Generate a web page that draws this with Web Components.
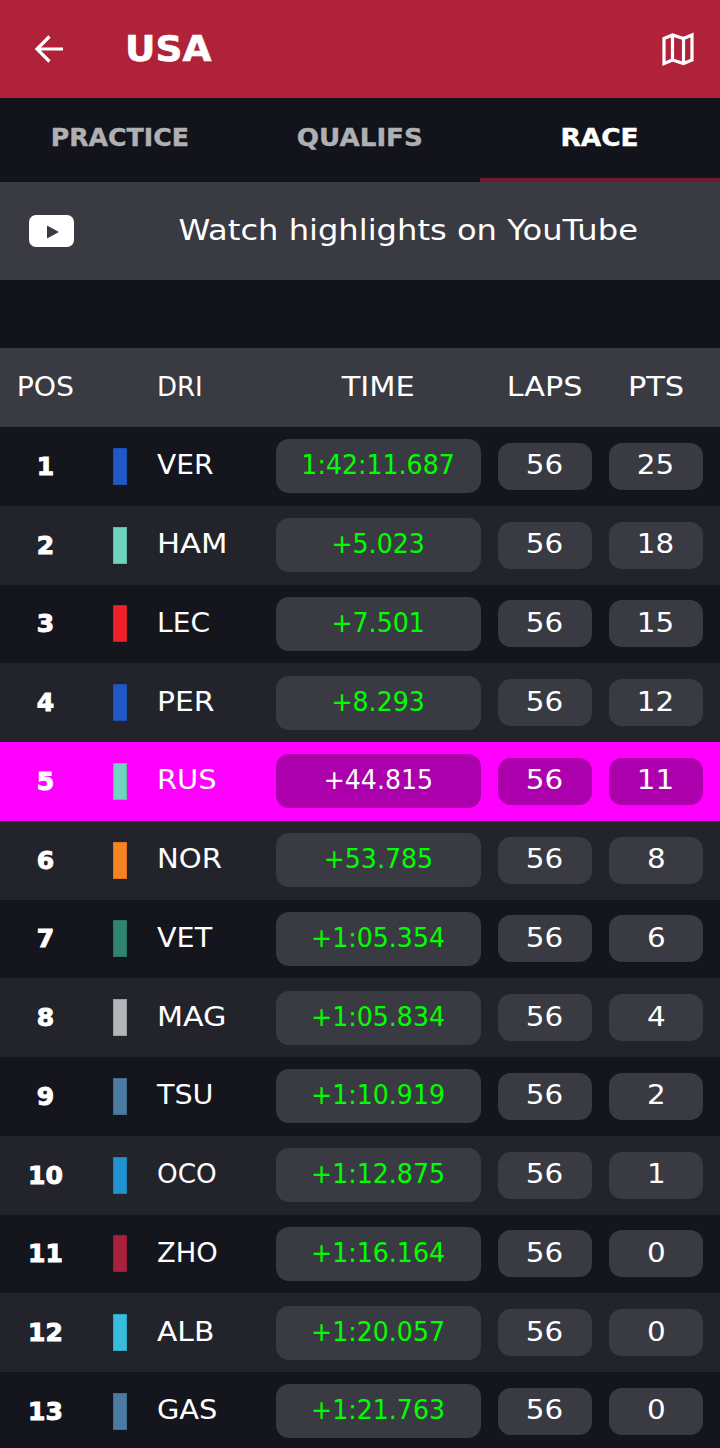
<!DOCTYPE html>
<html>
<head>
<meta charset="utf-8">
<title>USA</title>
<style>
  html, body { margin: 0; padding: 0; background: #12131b; overflow: hidden; }
  body { font-family: "DejaVu Sans", sans-serif; color: #fff; height: 1448px; }
</style>
</head>
<body>
<app-bar title="USA"></app-bar>
<tab-bar></tab-bar>
<video-banner>Watch highlights on YouTube</video-banner>
<results-table id="results"></results-table>

<script>
// the original face is much wider than anything installed, so text gets stretched
const wideText = `
  .w {
    display: inline-block;
    white-space: nowrap;
    transform: scaleX(var(--sx, 1));
  }
`;

class AppBar extends HTMLElement {
  constructor() {
    super();
    this.attachShadow({ mode: 'open' });
    this.shadowRoot.innerHTML = `
      <style>
        ${wideText}
        :host {
          display: flex;
          align-items: center;
          height: 98px;
          background-color: #b02239;
        }
        .back { margin-left: 28px; width: 42px; height: 42px; flex: none; }
        h1 {
          margin: 0 0 0 55px;
          flex: 1;
          font: 700 35px/1 "DejaVu Sans", sans-serif;
          -webkit-text-stroke: 0.6px #fff;
        }
        h1 .w { transform-origin: left center; }
        .map { margin-right: 24px; width: 36px; height: 36px; flex: none; }
      </style>
      <svg class="back" viewBox="0 0 42 42" fill="none" stroke="#fff" stroke-width="3.2">
        <path d="M35 21H9M21.500 8.500L9 21 21.500 33.500"/>
      </svg>
      <h1><span class="w" style="--sx:1.07">${this.getAttribute('title')}</span></h1>
      <svg class="map" viewBox="0 0 36 36" fill="none" stroke="#fff" stroke-width="3.2" stroke-linejoin="miter">
        <path d="M4 7.500L12.500 4 23.500 7.500 32 4V29L23.500 32.500 12.500 29 4 32.500ZM12.500 4V29M23.500 7.500V32.500"/>
      </svg>
    `;
  }
}
customElements.define('app-bar', AppBar);

class TabBar extends HTMLElement {
  constructor() {
    super();
    this.attachShadow({ mode: 'open' });
    this.shadowRoot.innerHTML = `
      <style>
        ${wideText}
        :host {
          display: grid;
          grid-template-columns: repeat(3, 1fr);
          height: 84px;
          background-color: #12131b;
        }
        div {
          display: flex;
          align-items: center;
          justify-content: center;
          font: 700 24px/1 "DejaVu Sans", sans-serif;
          -webkit-text-stroke: 0.4px currentColor;
          color: #b0b0b3;
          box-sizing: border-box;
          border-bottom: 4px solid transparent;
        }
        .active { color: #fff; border-bottom-color: #6f1a2d; }
      </style>
      <div><span class="w" style="--sx:1.05">PRACTICE</span></div>
      <div><span class="w" style="--sx:1.09">QUALIFS</span></div>
      <div class="active"><span class="w" style="--sx:1.1">RACE</span></div>
    `;
  }
}
customElements.define('tab-bar', TabBar);

class VideoBanner extends HTMLElement {
  constructor() {
    super();
    this.attachShadow({ mode: 'open' });
    this.shadowRoot.innerHTML = `
      <style>
        ${wideText}
        :host {
          display: flex;
          align-items: center;
          height: 98px;
          background-color: #393a42;
          margin-bottom: 68px;
          font: 400 28px/1 "DejaVu Sans", sans-serif;
        }
        svg { margin-left: 29px; width: 45px; height: 32px; flex: none; }
        span.label { flex: 1; text-align: center; padding-left: 23px; }
      </style>
      <svg viewBox="0 0 45 32">
        <rect width="45" height="32" rx="7" fill="#fff"/>
        <path d="M18 10.500L30 17 18 23.500Z" fill="#393a42"/>
      </svg>
      <span class="label"><span class="w" style="--sx:1.148"><slot></slot></span></span>
    `;
  }
}
customElements.define('video-banner', VideoBanner);

class ResultRow extends HTMLElement {
  constructor() {
    super();
    this.attachShadow({ mode: 'open' });
    this.shadowRoot.innerHTML = `
      <style>
        ${wideText}
        :host {
          display: grid;
          grid-template-columns: 91px 66px 119px 205px 111px 111px;
          align-items: center;
          height: 78.75px;
          background-color: #15151e;
          font: 400 26px/1 "DejaVu Sans", sans-serif;
        }
        :host([even]) { background-color: #22232b; }
        :host([me]) { background-color: #ff00ff; }
        .pos {
          text-align: center;
          font-weight: 700;
          font-size: 25px;
          -webkit-text-stroke: 1px #fff;
        }
        .bar {
          margin-left: 22px;
          width: 14px;
          height: 37px;
          box-sizing: border-box;
          border: 1px solid rgba(0, 0, 0, 0.12);
          background-color: var(--team);
        }
        .dri { padding-bottom: 2px; }
        .dri .w { transform-origin: left center; }
        .pill {
          display: flex;
          align-items: center;
          justify-content: center;
          height: 47px;
          width: 94px;
          justify-self: end;
          border-radius: 13px;
          background-color: #393a42;
          --sx: 1.13;
        }
        .pill .w { padding-bottom: 2px; }
        :host([me]) .pill { background-color: #ad00ad; }
        .time { width: 205px; height: 54px; color: #00ff00; justify-self: start; --sx: 0.97; }
        :host([me]) .time { color: #fff; }
      </style>
      <div class="pos"></div>
      <div class="bar"></div>
      <div class="dri"><span class="w"></span></div>
      <div class="pill time"><span class="w"></span></div>
      <div class="pill laps"><span class="w"></span></div>
      <div class="pill pts"><span class="w"></span></div>
    `;
  }

  connectedCallback() {
    const root = this.shadowRoot;
    root.querySelector('.pos').textContent = this.getAttribute('pos');
    root.querySelector('.dri .w').textContent = this.getAttribute('dri');
    root.querySelector('.dri .w').style.setProperty('--sx', this.getAttribute('sx'));
    root.querySelector('.time .w').textContent = this.getAttribute('time');
    root.querySelector('.laps .w').textContent = this.getAttribute('laps');
    root.querySelector('.pts .w').textContent = this.getAttribute('pts');
    root.querySelector('.bar').style.setProperty('--team', this.getAttribute('team'));
  }
}
customElements.define('result-row', ResultRow);

class ResultsTable extends HTMLElement {
  constructor() {
    super();
    this.attachShadow({ mode: 'open' });
    this.shadowRoot.innerHTML = `
      <style>
        ${wideText}
        :host { display: block; }
        .head {
          display: grid;
          grid-template-columns: 91px 66px 119px 205px 111px 111px;
          align-items: center;
          height: 79px;
          background-color: #393a42;
          font: 400 26px/1 "DejaVu Sans", sans-serif;
        }
        .head div { text-align: center; padding-bottom: 2px; }
        .head .dri { grid-column: 3; text-align: left; }
        .head .num { padding-left: 17px; }
      </style>
      <div class="head">
        <div><span class="w" style="--sx:1.09">POS</span></div>
        <div class="dri">DRI</div>
        <div><span class="w" style="--sx:1.17">TIME</span></div>
        <div class="num"><span class="w" style="--sx:1.165">LAPS</span></div>
        <div class="num"><span class="w" style="--sx:1.17">PTS</span></div>
      </div>
      <div id="rows"></div>
    `;
  }

  connectedCallback() {
    const data = [
      ['VER', '1:42:11.687', 25, '#2058c8', 1.08],
      ['HAM', '+5.023', 18, '#6fd4bd', 1.18],
      ['LEC', '+7.501', 15, '#f0202a', 1.08],
      ['PER', '+8.293', 12, '#2058c8', 1.145],
      ['RUS', '+44.815', 11, '#6fd4bd', 1.11],
      ['NOR', '+53.785', 8, '#f78420', 1.12],
      ['VET', '+1:05.354', 6, '#2f8570', 1.1],
      ['MAG', '+1:05.834', 4, '#b4b5b8', 1.16],
      ['TSU', '+1:10.919', 2, '#4b7ba0', 1.1],
      ['OCO', '+1:12.875', 1, '#2293d1', 1.01],
      ['ZHO', '+1:16.164', 0, '#a8213c', 1.05],
      ['ALB', '+1:20.057', 0, '#37bcdc', 1.145],
      ['GAS', '+1:21.763', 0, '#4b7ba0', 1.11],
    ];
    const rows = this.shadowRoot.querySelector('#rows');
    data.forEach((d, i) => {
      const row = document.createElement('result-row');
      row.setAttribute('pos', i + 1);
      row.setAttribute('dri', d[0]);
      row.setAttribute('time', d[1]);
      row.setAttribute('laps', 56);
      row.setAttribute('pts', d[2]);
      row.setAttribute('team', d[3]);
      row.setAttribute('sx', d[4]);
      if (i % 2 === 1) row.setAttribute('even', '');
      if (d[0] === 'RUS') row.setAttribute('me', '');
      rows.appendChild(row);
    });
  }
}
customElements.define('results-table', ResultsTable);
</script>
</body>
</html>
